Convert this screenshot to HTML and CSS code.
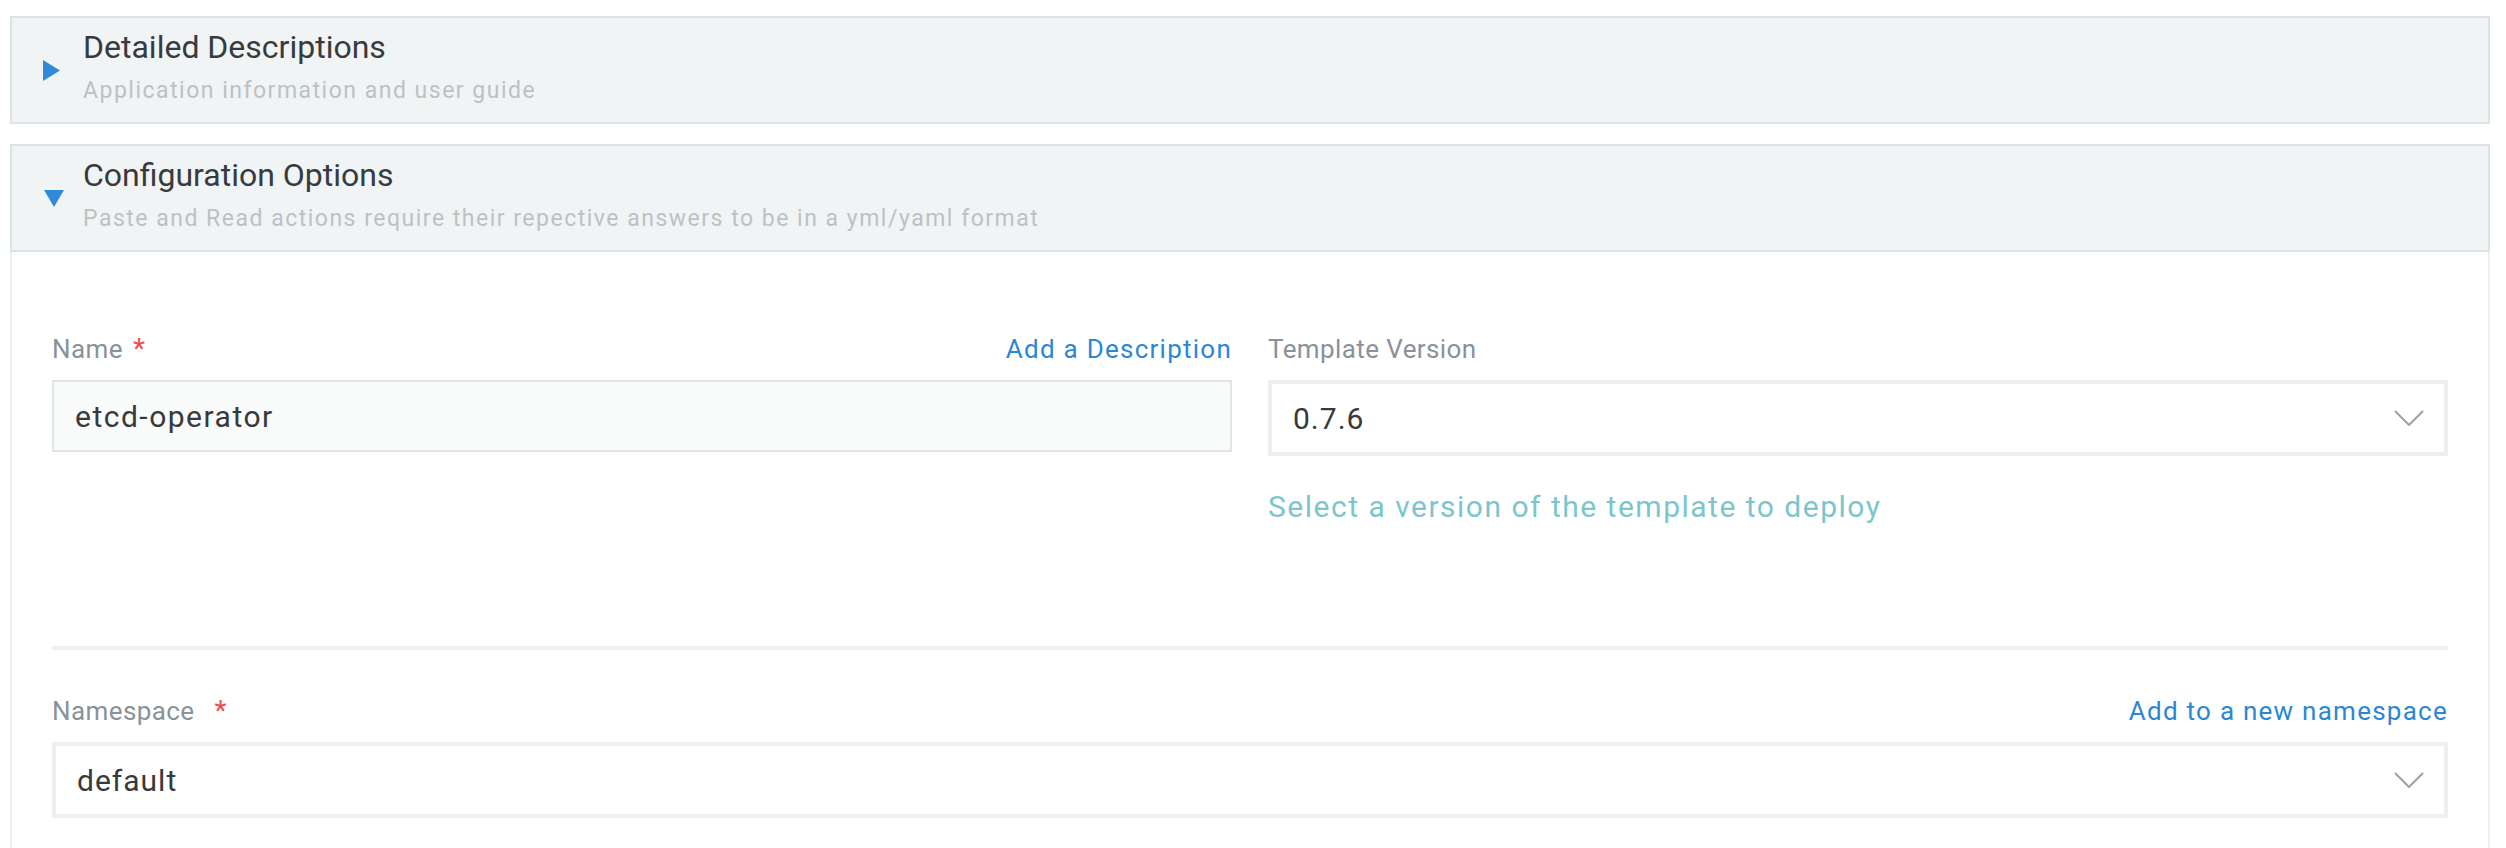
FILE: index.html
```html
<!DOCTYPE html>
<html lang="en">
<head>
<meta charset="utf-8">
<title>Configuration</title>
<link rel="stylesheet" href="styles.css">
</head>
<body>
<div class="page">
  <section class="accordion">
    <div class="acc-header">
      <span class="acc-icon">
        <svg class="tri-right" width="17" height="21" viewBox="0 0 17 21"><polygon points="0,0 17,10.5 0,21" fill="#2f8bd7"/></svg>
      </span>
      <div class="acc-text">
        <div class="acc-title">Detailed Descriptions</div>
        <div class="acc-sub">Application information and user guide</div>
      </div>
    </div>
  </section>

  <section class="accordion open">
    <div class="acc-header">
      <span class="acc-icon">
        <svg class="tri-down" width="20" height="17" viewBox="0 0 20 17"><polygon points="0,0 20,0 10,17" fill="#2f8bd7"/></svg>
      </span>
      <div class="acc-text">
        <div class="acc-title">Configuration Options</div>
        <div class="acc-sub">Paste and Read actions require their repective answers to be in a yml/yaml format</div>
      </div>
    </div>

    <div class="acc-body">
      <div class="row two">
        <div class="field">
          <div class="label-row">
            <label class="label">Name<span class="req">*</span></label>
            <a class="link">Add a Description</a>
          </div>
          <div class="input">etcd-operator</div>
        </div>
        <div class="field">
          <div class="label-row">
            <label class="label">Template Version</label>
          </div>
          <div class="select">
            <span>0.7.6</span>
            <svg class="chev" width="30" height="16" viewBox="0 0 30 16"><polyline points="1,1 15,15 29,1" fill="none" stroke="#9aa1a7" stroke-width="2"/></svg>
          </div>
          <div class="help">Select a version of the template to deploy</div>
        </div>
      </div>

      <div class="divider"></div>

      <div class="field">
        <div class="label-row">
          <label class="label">Namespace<span class="req wide">*</span></label>
          <a class="link">Add to a new namespace</a>
        </div>
        <div class="select">
          <span>default</span>
          <svg class="chev" width="30" height="16" viewBox="0 0 30 16"><polyline points="1,1 15,15 29,1" fill="none" stroke="#9aa1a7" stroke-width="2"/></svg>
        </div>
      </div>
    </div>
  </section>
</div>
</body>
</html>
```

FILE: styles.css
```css
* { box-sizing: border-box; }

html, body {
  margin: 0;
  background: #ffffff;
  font-family: Roboto, "Open Sans", "Liberation Sans", sans-serif;
}

.page {
  padding: 16px 16px 0 10px;
}

.accordion + .accordion {
  margin-top: 20px;
}

.acc-header {
  display: flex;
  align-items: center;
  background: #f1f4f5;
  border: 2px solid #dce3e6;
  padding: 9px 0 16px 31px;
}

.acc-icon {
  width: 22px;
  margin-right: 18px;
  margin-top: 7px;
  display: flex;
  align-items: center;
}

.tri-down {
  margin-left: 1px;
}

.acc-title {
  font-size: 32px;
  line-height: 40px;
  color: #383b3e;
}

.acc-sub {
  margin-top: 9px;
  font-size: 23px;
  line-height: 30px;
  color: #bcc1c5;
  letter-spacing: 1.5px;
}

.acc-body {
  border-left: 2px solid #edf0f2;
  border-right: 2px solid #edf0f2;
  padding: 79px 40px 0 40px;
  min-height: 620px;
}

.row.two {
  display: grid;
  grid-template-columns: 1fr 1fr;
  column-gap: 36px;
}

.label-row {
  display: flex;
  justify-content: space-between;
  align-items: baseline;
  height: 36px;
  line-height: 36px;
  font-size: 26px;
  margin-bottom: 13px;
}

.label {
  color: #8a9299;
  letter-spacing: 0.4px;
}

.req {
  color: #f04a4f;
  margin-left: 10px;
  font-size: 28px;
}

.req.wide {
  margin-left: 20px;
}

.link {
  color: #2b87d3;
  letter-spacing: 1.25px;
  cursor: pointer;
}

.input {
  height: 72px;
  border: 2px solid #dfe5e8;
  background: #f9fafa;
  padding: 0 21px;
  display: flex;
  align-items: center;
  font-size: 30px;
  letter-spacing: 1.5px;
  color: #38393a;
}

.select {
  height: 76px;
  border: 4px solid #ebeff1;
  background: #ffffff;
  padding: 0 20px 0 21px;
  display: flex;
  align-items: center;
  justify-content: space-between;
  font-size: 30px;
  letter-spacing: 1px;
  color: #38393a;
}

.chev {
  flex: none;
}

.help {
  margin-top: 31px;
  font-size: 30px;
  line-height: 40px;
  color: #7cc6cb;
  letter-spacing: 1.5px;
}

.divider {
  height: 4px;
  background: #ebeff1;
  margin: 119px 0 43px;
}
```
